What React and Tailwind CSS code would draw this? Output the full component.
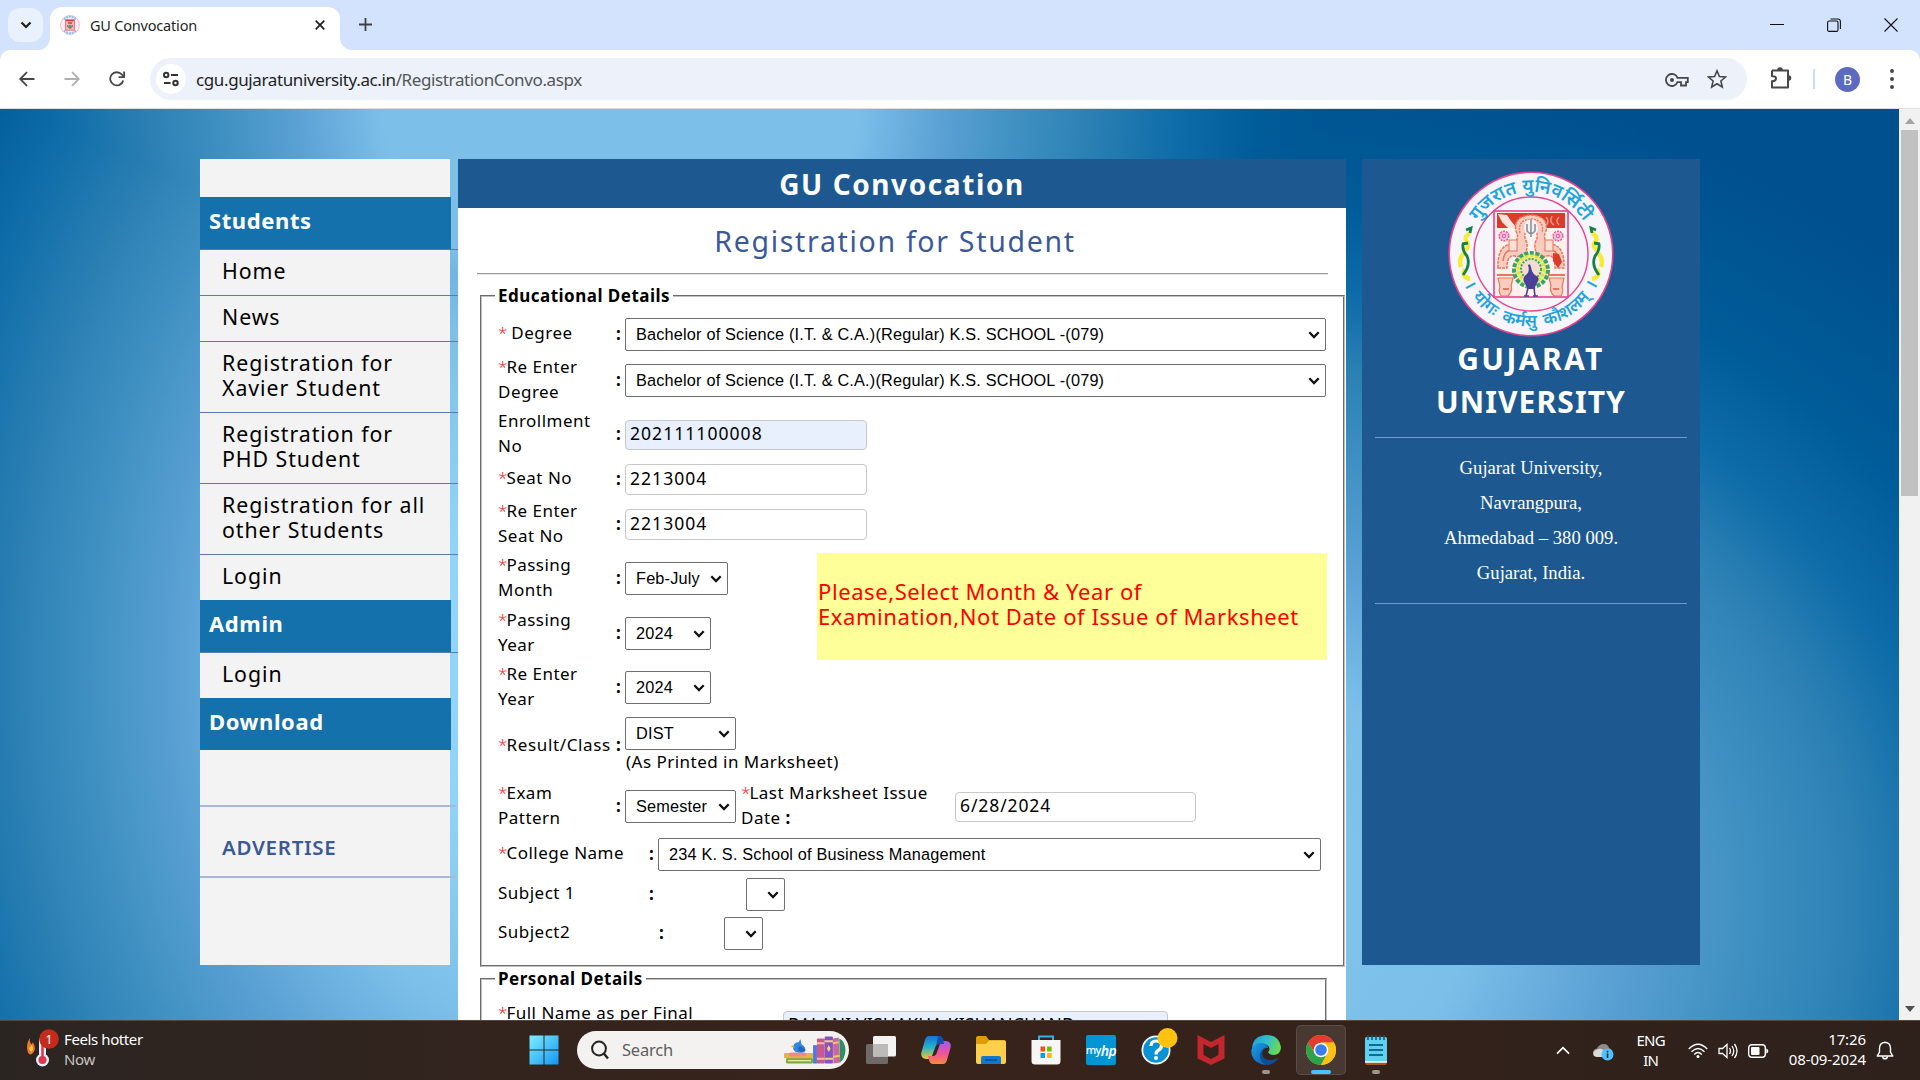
import React from "react";

/* ---------- browser chrome ---------- */

function Crest({ className }) {
  return (
    <svg viewBox="0 0 166 166" className={className}>
      <defs>
        <path id="arcTop" d="M 21 83 A 62 62 0 0 1 145 83" />
        <path id="arcBottom" d="M 9.500 73 A 74 74 0 1 0 156.500 73" />
      </defs>
      <circle cx="83" cy="83" r="81.8" fill="#f5f5fa" stroke="#e8428f" strokeWidth="1.6" />
      <circle cx="83" cy="83" r="57" fill="#f5f5fa" stroke="#e8428f" strokeWidth="1.4" />
      <rect x="46" y="40" width="74" height="86" fill="#fdf1ee" stroke="#e8428f" strokeWidth="1.6" />
      <rect x="49" y="42" width="68" height="15" fill="#dc3a2a" />
      <path d="M50 43l9 1 4 6 6 7h-9l-6-6z" fill="#fbe4de" />
      <path d="M98 46q4 5 0 8M104 45q-3 6 2 9M111 46q-4 4 0 8" stroke="#f29a86" strokeWidth="1.4" fill="none" />
      <path
        d="M50 97q-1-21 12-24 11-3 6-13-3-15 15-16 18 1 15 16-5 10 6 13 13 3 12 24h-9q0-14-8-12-13 3-12-13 6-11-4-14-10 3-4 14 1 16-12 13-8-2-8 12z"
        fill="#f8cdbf"
        stroke="#e8765c"
        strokeWidth="1.5"
        strokeDasharray="3 1"
      />
      <path d="M72 62q-3-13 11-14 14 1 11 14" stroke="#e8765c" strokeWidth="1.4" fill="none" strokeDasharray="2 1" />
      <path d="M55 90q1-10 8-11M111 90q-1-10-8-11" stroke="#e8765c" strokeWidth="1.5" fill="none" />
      <path d="M105 82l6 1 3 8-4 6-5-7z" fill="#dc3a2a" />
      <rect x="61" y="69" width="8" height="11" fill="#fbe0d6" stroke="#e8765c" />
      <rect x="97" y="69" width="8" height="11" fill="#fbe0d6" stroke="#e8765c" />
      <circle cx="56" cy="65" r="4.8" fill="#f7c3dc" stroke="#e8559a" strokeWidth="1.5" strokeDasharray="2 1" />
      <circle cx="56" cy="65" r="1.8" fill="none" stroke="#e8559a" />
      <circle cx="110" cy="65" r="4.8" fill="#f7c3dc" stroke="#e8559a" strokeWidth="1.5" strokeDasharray="2 1" />
      <circle cx="110" cy="65" r="1.8" fill="none" stroke="#e8559a" />
      <ellipse cx="83" cy="57" rx="7" ry="9" fill="#f3f1f3" />
      <path d="M83 48v18m-4-13v7q4 5 8 0v-7" stroke="#8f9299" strokeWidth="1.6" fill="none" />
      <path d="M50 107h15l-2 8q2 5-3 10h-7q-3-5-1-9zM116 107h-15l2 8q-2 5 3 10h7q3-5 1-9z" fill="#f8cdbf" stroke="#e8765c" strokeWidth="1.2" />
      <path d="M49 104h17M100 104h17M55 118h6M105 118h6" stroke="#e8765c" strokeWidth="2" />
      <circle cx="83" cy="99" r="17" fill="#e4f0a0" stroke="#3fa06a" strokeWidth="4" strokeDasharray="4 1.6" />
      <circle cx="83" cy="98" r="13" fill="none" stroke="#e6e238" strokeWidth="3" strokeDasharray="3 2" />
      <circle cx="83" cy="98" r="10" fill="#f6dcd0" stroke="#3fa06a" strokeWidth="2" strokeDasharray="2 1.4" />
      <path d="M80 94q2-2 3 2 1 6 4 8 6 3 2 8l-3 6h-6l-4-7q-2-5 3-8 3-3 1-9z" fill="#4b3f9c" />
      <path d="M80 117l-2 8M86 117l1 8M76 125h5M85 125h5" stroke="#4b3f9c" strokeWidth="1.6" />
      <path d="M22 62q-7 4-3 9 3 5-2 8" stroke="#f5ec33" strokeWidth="4" fill="none" />
      <path d="M17 82q-7 4-4 14M17 98q-4 8 5 10" stroke="#f5ec33" strokeWidth="4.5" fill="none" />
      <path d="M18 59l5-2-1 5M15 73q-1 6 4 12 4 9-4 19M14 73l6-1" stroke="#15804a" strokeWidth="2.8" fill="none" />
      <path d="M144 62q7 4 3 9-3 5 2 8M149 82q7 4 4 14M149 98q4 8-5 10" stroke="#f5ec33" strokeWidth="4.5" fill="none" />
      <path d="M148 59l-5-2 1 5M151 73q1 6-4 12-4 9 4 19M152 73l-6-1" stroke="#15804a" strokeWidth="2.8" fill="none" />
      <g fill="#1fa3dc" fontFamily="Noto Sans, sans-serif" fontWeight="600">
        <text textAnchor="middle" fontSize="18.5">
          <textPath href="#arcTop" startOffset="50%">
            गुजरात युनिवर्सिटी
          </textPath>
        </text>
        <text textAnchor="middle" fontSize="17" wordSpacing="4">
          <textPath href="#arcBottom" startOffset="50%">
            । योगः कर्मसु कौशलम् ।
          </textPath>
        </text>
      </g>
    </svg>
  );
}

function MiniCrest() {
  return (
    <svg viewBox="0 0 20 20" className="h-5 w-5">
      <circle cx="10" cy="10" r="9.4" fill="#fdf0f6" stroke="#f3b4d3" />
      <path d="M4 4.5A8 8 0 0 1 16 4.5M4 15.5A8 8 0 0 0 16 15.5" stroke="#7fc6ea" strokeWidth="2" fill="none" strokeDasharray="2 .8" />
      <rect x="5.5" y="4.8" width="9" height="10.4" fill="#f7b8ae" stroke="#ea5f78" strokeWidth=".8" />
      <path d="M6 5.5h8M8 8h4M7 11h1M12 11h1" stroke="#dc3a4a" strokeWidth="1.5" />
      <circle cx="10" cy="11.8" r="2" fill="#5a8f78" />
    </svg>
  );
}

function TabStrip() {
  return (
    <div className="flex h-[50px] bg-[#d3e3fd]">
      <div className="mt-2 ml-2 flex h-[34px] w-[35px] items-center justify-center rounded-xl bg-[#e9f1fe]">
        <svg viewBox="0 0 12 8" className="h-2 w-3">
          <path d="M1.500 1.500L6 6l4.500-4.500" fill="none" stroke="#1f1f1f" strokeWidth="2.200" />
        </svg>
      </div>
      <svg viewBox="0 0 12 12" className="-ml-[5px] h-3 w-3 self-end">
        <path d="M12 0v12H0A12 12 0 0 0 12 0z" fill="#fff" />
      </svg>
      <div className="mt-[7px] flex h-[43px] w-[290px] items-center rounded-t-xl bg-white pb-[7px] pl-[10px]">
        <MiniCrest />
        <span className="ml-[10px] flex-1 pt-[2px] text-[14.5px] tracking-[-0.2px] text-[#1f1f1f]">GU Convocation</span>
        <svg viewBox="0 0 10 10" className="mr-[15px] h-[10px] w-[10px]">
          <path d="M.7.7l8.600 8.600M9.300.7L.7 9.300" stroke="#1f1f1f" strokeWidth="1.700" />
        </svg>
      </div>
      <svg viewBox="0 0 12 12" className="h-3 w-3 self-end">
        <path d="M0 0v12h12A12 12 0 0 1 0 0z" fill="#fff" />
      </svg>
      <svg viewBox="0 0 13 13" className="mt-[18px] ml-[7px] h-[13px] w-[13px]">
        <path d="M6.500 0v13M0 6.500h13" stroke="#3c4043" strokeWidth="1.800" />
      </svg>
      <div className="ml-auto flex h-[49px] items-center gap-[43px] pr-[22px]">
        <svg viewBox="0 0 14 14" className="h-[14px] w-[14px]">
          <path d="M0 6.500h14" stroke="#111" strokeWidth="1" />
        </svg>
        <svg viewBox="0 0 14 14" className="h-[14px] w-[14px]">
          <rect x=".6" y="3" width="10.400" height="10.400" rx="1.500" fill="none" stroke="#111" strokeWidth="1.100" />
          <path d="M3.500 1h7.500a2.400 2.400 0 0 1 2.400 2.400v7.600" fill="none" stroke="#111" strokeWidth="1.100" />
        </svg>
        <svg viewBox="0 0 14 14" className="h-[14px] w-[14px]">
          <path d="M.5.5l13 13M13.500.5l-13 13" stroke="#111" strokeWidth="1.100" />
        </svg>
      </div>
    </div>
  );
}

function Toolbar() {
  return (
    <div className="bg-[#d3e3fd]">
      <div className="flex h-[59px] items-center rounded-t-[10px] border-b border-[#dcdfe3] bg-white">
        <svg viewBox="0 0 16 16" className="ml-[19px] h-4 w-4">
          <path d="M15.500 8H1.500M8 1.200L1.200 8 8 14.800" fill="none" stroke="#474747" strokeWidth="1.800" />
        </svg>
        <svg viewBox="0 0 16 16" className="ml-[29px] h-4 w-4">
          <path d="M.5 8h14M8 1.200L14.800 8 8 14.800" fill="none" stroke="#b0b0b0" strokeWidth="1.800" />
        </svg>
        <svg viewBox="0 0 16 16" className="ml-[29px] h-4 w-4">
          <path d="M14.200 9.500A6.600 6.600 0 1 1 12.800 3.500l1.700 1.700" fill="none" stroke="#474747" strokeWidth="1.800" />
          <path d="M15.100.5v5.600H9.600" fill="none" stroke="#474747" strokeWidth="1.800" />
        </svg>
        <div className="ml-[25px] flex h-[42px] w-[1597px] items-center rounded-full bg-[#ecf1fa]">
          <span className="ml-[6px] flex h-[30px] w-[30px] items-center justify-center rounded-full bg-white">
            <svg viewBox="0 0 16 16" className="h-4 w-4" fill="none" stroke="#333" strokeWidth="2">
              <circle cx="3.200" cy="4" r="2.200" />
              <path d="M8 4h7M1 12h6.500" />
              <circle cx="12.500" cy="12" r="2.200" />
            </svg>
          </span>
          <span className="ml-[10px] pt-px text-[17px] tracking-[-0.380px] text-[#555]">
            <span className="text-[#1f1f1f]">cgu.gujaratuniversity.ac.in</span>/RegistrationConvo.aspx
          </span>
          <svg viewBox="0 0 24 14" className="mt-[2px] ml-auto h-[14px] w-6" fill="none" stroke="#474747" strokeWidth="1.800">
            <path d="M12.500 4.800A6 6 0 1 0 12.500 9.200H16v3.300h5V9.200h1.800V4.800z" />
            <circle cx="7" cy="7" r="2" fill="#474747" stroke="none" />
          </svg>
          <svg viewBox="0 0 20 20" className="mr-[20px] ml-[18px] h-5 w-5" fill="none" stroke="#474747" strokeWidth="1.600">
            <path d="M10 1.800l2.400 5.700 6.100.5-4.600 4 1.400 6L10 14.800 4.700 18l1.400-6-4.600-4 6.100-.5z" />
          </svg>
        </div>
        <svg viewBox="0 0 22 25" className="-mt-[3px] ml-[23px] h-[25px] w-[22px]">
          <path
            d="M2 5.500h16v5.500M18 15v7.500H2v-6.200q4-.3 4-2.800T2 11.200V5.500M18 11v4"
            fill="none"
            stroke="#474747"
            strokeWidth="2"
            strokeLinejoin="round"
          />
          <path d="M7.200 5a2.800 2.800 0 0 1 5.600 0zM18.500 10.300a2.800 2.800 0 0 1 0 5.600z" fill="#474747" />
        </svg>
        <span className="ml-[21px] h-5 w-[2px] bg-[#c9dcfa]" />
        <span className="ml-[20px] flex h-[25px] w-[25px] items-center justify-center rounded-full bg-[#5c6bc0] text-[14px] text-white">
          B
        </span>
        <span className="ml-[30px] flex flex-col gap-[4px]">
          <i className="h-1 w-1 rounded-full bg-[#474747]" />
          <i className="h-1 w-1 rounded-full bg-[#474747]" />
          <i className="h-1 w-1 rounded-full bg-[#474747]" />
        </span>
      </div>
    </div>
  );
}

/* ---------- left menu ---------- */

const SectionHead = ({ children }) => (
  <div className="flex h-[52px] w-[251px] items-center bg-[#1571ab] pb-[5px] pl-[9px] text-[22px] font-bold tracking-[0.600px] text-white">
    {children}
  </div>
);

const MenuItem = ({ children }) => (
  <div className="w-[258px] border-t border-[#5f78b4] pt-[8px] pr-4 pb-[12px] pl-[22px] text-[21.300px] leading-[25px] tracking-[0.950px] text-black">
    {children}
  </div>
);

function Sidebar() {
  return (
    <div className="h-[806px] w-[250px] bg-[#f3f3f3] pt-[38px]">
      <SectionHead>Students</SectionHead>
      <MenuItem>Home</MenuItem>
      <MenuItem>News</MenuItem>
      <MenuItem>
        Registration for
        <br />
        Xavier Student
      </MenuItem>
      <MenuItem>
        Registration for
        <br />
        PHD Student
      </MenuItem>
      <MenuItem>
        Registration for all
        <br />
        other Students
      </MenuItem>
      <MenuItem>Login</MenuItem>
      <SectionHead>Admin</SectionHead>
      <MenuItem>Login</MenuItem>
      <SectionHead>Download</SectionHead>
      <div className="mt-[55px] flex h-[73px] w-[256px] items-center border-y-2 border-[#aab7d8] pt-[12px] pl-[22px] text-[20.500px] font-semibold tracking-[0.700px] text-[#3b5998]">
        ADVERTISE
      </div>
    </div>
  );
}

/* ---------- form ---------- */

const Star = () => <span className="font-light tracking-[-0.900px] text-red-500">*</span>;

const Select = ({ children, className }) => (
  <div
    className={
      "flex h-[33px] shrink-0 items-center justify-between rounded-[2px] border border-[#6f6f6f] bg-white pr-[5px] pl-[10px] font-['Liberation_Sans',sans-serif] text-[16.300px] tracking-[0.180px] whitespace-nowrap text-black " +
      className
    }
  >
    <span>{children}</span>
    <svg viewBox="0 0 12 8" className="mt-px h-2 w-3 shrink-0">
      <path d="M1.300 1.300L6 6l4.700-4.700" fill="none" stroke="#111" strokeWidth="2.300" />
    </svg>
  </div>
);

const Input = ({ children, className }) => (
  <div
    className={
      "flex shrink-0 items-center rounded-[4px] border border-[#c8c8c8] pb-[3px] pl-[4px] text-[17.500px] text-black " +
      className
    }
  >
    {children}
  </div>
);

function Row({ className, label, labelWidth = "w-[118px]", children }) {
  return (
    <div className={"flex items-center " + className}>
      <div className={"shrink-0 pb-[4px] whitespace-nowrap " + labelWidth}>{label}</div>
      <div className="w-[9px] shrink-0 pb-[3px] font-bold">:</div>
      {children}
    </div>
  );
}

const fieldBase =
  "border-2 border-[#c0c0c0] [border-style:groove] pl-[13px] text-[17px] leading-[25px] tracking-[0.480px] text-black";

function EducationalDetails() {
  return (
    <fieldset className={"mt-[11px] ml-[22px] h-[681px] w-[865px] " + fieldBase}>
      <legend className="px-[3px] text-[17px] leading-5 font-bold tracking-[0.480px]">Educational Details</legend>
      <div className="pl-[3px]">
        <Row className="mt-2 h-[41px]" label={<><Star /> Degree</>}>
          <Select className="w-[701px]">Bachelor of Science (I.T. &amp; C.A.)(Regular) K.S. SCHOOL -(079)</Select>
        </Row>
        <Row className="h-[51px]" label={<><Star />Re Enter<br />Degree</>}>
          <Select className="w-[701px]">Bachelor of Science (I.T. &amp; C.A.)(Regular) K.S. SCHOOL -(079)</Select>
        </Row>
        <Row className="mt-1 h-[50px]" label={<>Enrollment<br />No</>}>
          <Input className="h-[30px] w-[242px] bg-[#e8f0fe] tracking-[1.050px]">202111100008</Input>
        </Row>
        <Row className="h-[39px]" label={<><Star />Seat No</>}>
          <Input className="h-[31px] w-[242px] bg-white tracking-[1.050px]">2213004</Input>
        </Row>
        <Row className="h-[51px]" label={<><Star />Re Enter<br />Seat No</>}>
          <Input className="h-[31px] w-[242px] bg-white tracking-[1.050px]">2213004</Input>
        </Row>
        <div className="flex h-[165px]">
          <div className="w-[319px]">
            <Row className="h-[57px]" label={<><Star />Passing<br />Month</>}>
              <Select className="w-[103px]">Feb-July</Select>
            </Row>
            <Row className="h-[53px]" label={<><Star />Passing<br />Year</>}>
              <Select className="w-[86px]">2024</Select>
            </Row>
            <Row className="h-[55px]" label={<><Star />Re Enter<br />Year</>}>
              <Select className="w-[86px]">2024</Select>
            </Row>
          </div>
          <div className="mt-[3px] flex h-[107px] w-[510px] items-center bg-[#ffff99] pb-[5px] pl-px text-[22px] leading-[25px] tracking-[0.580px] text-[#ff0000]">
            <p className="whitespace-nowrap">
              Please,Select Month &amp; Year of
              <br />
              Examination,Not Date of Issue of Marksheet
            </p>
          </div>
        </div>
        <div className="mt-[2px] flex h-[60px]">
          <div className="mt-[15px] flex w-[127px]">
            <div className="w-[118px] tracking-[0.650px] whitespace-nowrap"><Star />Result/Class</div>
            <b>:</b>
          </div>
          <div>
            <Select className="w-[111px]">DIST</Select>
            <div className="-mt-px pl-px whitespace-nowrap">(As Printed in Marksheet)</div>
          </div>
        </div>
        <Row className="h-[59px]" label={<><Star />Exam<br />Pattern</>}>
          <Select className="w-[111px]">Semester</Select>
          <div className="ml-[5px] w-[214px] pb-[4px]">
            <Star />Last Marksheet Issue
            <br />
            Date <b>:</b>
          </div>
          <Input className="h-[30px] w-[241px] bg-white tracking-[0.900px]">6/28/2024</Input>
        </Row>
        <Row className="h-[37px]" labelWidth="w-[151px]" label={<><Star />College Name</>}>
          <Select className="w-[663px]">234 K. S. School of Business Management</Select>
        </Row>
        <Row className="h-[43px]" labelWidth="w-[151px]" label="Subject 1">
          <Select className="ml-[88px] w-[39px]" />
        </Row>
        <Row className="h-[35px]" labelWidth="w-[161px]" label="Subject2">
          <Select className="ml-[56px] w-[39px]" />
        </Row>
      </div>
    </fieldset>
  );
}

function PersonalDetails() {
  return (
    <fieldset className={"mt-[2px] ml-[22px] h-[300px] w-[847px] " + fieldBase}>
      <legend className="px-[3px] text-[17px] leading-5 font-bold tracking-[0.480px]">Personal Details</legend>
      <div className="flex pl-[3px]">
        <div className="mt-[11px] w-[285px] whitespace-nowrap">
          <Star />Full Name as per Final
        </div>
        <Input className="mt-[22px] h-[30px] w-[385px] bg-[#e8f0fe] tracking-[0.200px]">BALANI VISHAKHA KISHANCHAND</Input>
      </div>
    </fieldset>
  );
}

function MainColumn() {
  return (
    <div className="z-10 ml-2 h-[1400px] w-[888px] shrink-0 bg-white">
      <h1 className="flex h-[49px] items-center justify-center bg-[#1d5990] text-[28px] font-bold tracking-[1.600px] text-white">
        GU Convocation
      </h1>
      <h2 className="mt-[12px] pr-[14px] text-center text-[28.500px] leading-[42px] tracking-[1.680px] text-[#3b5998]">
        Registration for Student
      </h2>
      <hr className="mt-[11px] ml-[19px] h-[2px] w-[851px] border-t border-b border-t-[#9a9a9a] border-b-[#e4e4e4]" />
      <EducationalDetails />
      <PersonalDetails />
    </div>
  );
}

function UniversityCard() {
  return (
    <div className="ml-4 flex h-[806px] w-[338px] flex-col items-center bg-[#1d5990] text-white">
      <Crest className="mt-[12px] h-[166px] w-[166px]" />
      <div className="text-center text-[30px] leading-[43px] font-bold">
        <div className="tracking-[2.400px]">GUJARAT</div>
        <div className="tracking-[1.100px]">UNIVERSITY</div>
      </div>
      <div className="mt-[14px] flex h-[167px] w-[312px] flex-col items-center border-y border-[#7099dc] pt-[12px] font-['Liberation_Serif',serif] text-[18.670px] leading-[35px]">
        <div>Gujarat University,</div>
        <div>Navrangpura,</div>
        <div>Ahmedabad – 380 009.</div>
        <div>Gujarat, India.</div>
      </div>
    </div>
  );
}

function ScrollBar() {
  return (
    <div className="flex w-[21px] flex-col items-center bg-[#f1f1f1]">
      <svg viewBox="0 0 10 6" className="mt-[9px] h-[6px] w-[10px]">
        <path d="M0 6L5 0l5 6z" fill="#a3a3a3" />
      </svg>
      <div className="mt-[6px] h-[366px] w-[17px] bg-[#c1c1c1]" />
      <svg viewBox="0 0 10 6" className="mt-auto mb-[8px] h-[6px] w-[10px]">
        <path d="M0 0h10L5 6z" fill="#505050" />
      </svg>
    </div>
  );
}

/* ---------- taskbar ---------- */

function BooksArt() {
  return (
    <svg viewBox="0 0 64 30" className="h-[30px] w-[62px]">
      <rect x="2" y="23" width="28" height="6" rx="2" fill="#7aa63c" />
      <path d="M4 26h24" stroke="#dfe9a8" strokeWidth="1.500" />
      <rect x="0" y="18" width="30" height="5.500" rx="1" fill="#e9b04c" />
      <rect x="5" y="17.500" width="18" height="4" rx="2" fill="#f08a86" />
      <path d="M12 17q-4-3-2-7 1-3 5-3l2-3 1 5q5 3 4 7-2 3-10 1z" fill="#2f86e4" />
      <path d="M10 10l-3 1 4 2z" fill="#f0a030" />
      <path d="M16 11q5 1 6 5-5 2-8-1z" fill="#1f66bd" />
      <rect x="30" y="10" width="4" height="19" fill="#4b7be0" />
      <rect x="34" y="3" width="8" height="26" rx="1" fill="#c9588f" />
      <path d="M34 8h8M34 24h8" stroke="#f4c1a0" strokeWidth="2" />
      <rect x="42" y="1" width="8.500" height="28" rx="1" fill="#8653c4" />
      <path d="M42 6h8.500M42 24h8.500" stroke="#f0d080" strokeWidth="2" />
      <path d="M46.200 10l2 3.500-2 3.500-2-3.500z" fill="#f0d080" />
      <path d="M50.500 3l6-1 1.500 26-7 1z" fill="#c76a9c" />
      <path d="M50.500 8l6-1M51 22l7-1" stroke="#f6c26a" strokeWidth="2" />
      <path d="M57 3q6 2 6.500 12-.5 9-5.500 13z" fill="#2f8f62" />
    </svg>
  );
}

const Slot = ({ children, active, indicator }) => (
  <div
    className={
      "mt-[4px] flex h-[50px] w-[50px] shrink-0 flex-col items-center rounded-[5px] border " +
      (active ? "border-white/10 bg-white/10" : "border-transparent")
    }
  >
    <div className="mt-[8px] flex h-[32px] items-center justify-center">{children}</div>
    <div className={"mt-1 h-1 shrink-0 rounded-full " + (indicator || "")} />
  </div>
);

function Taskbar() {
  return (
    <div className="flex h-[60px] border-t border-[#55483f] bg-linear-to-r from-[#2b2522] via-[#38231a] via-45% to-[#2e211c] text-white">
      <div className="flex w-[519px] items-center pb-[3px]">
        <svg viewBox="0 0 36 40" className="ml-[26px] h-10 w-9">
          <path d="M1 19q1 9 5.500 5.500T7 13q-1 3-2 2-2-3-1-6-3 4-3 10z" fill="#f0762c" />
          <path d="M3 19q1 5 3 3t0-6z" fill="#ffc94a" />
          <rect x="13" y="8" width="7" height="24" rx="3.500" fill="#dff0fb" />
          <circle cx="16.500" cy="31" r="6.500" fill="#dff0fb" />
          <circle cx="16.500" cy="31" r="4" fill="#e0354e" />
          <path d="M16.500 14v16" stroke="#e0354e" strokeWidth="2.500" />
          <circle cx="23" cy="10" r="9.800" fill="#c42b1c" />
          <text x="23" y="14.500" textAnchor="middle" fontSize="13" fill="#fff" fontFamily="Noto Sans, sans-serif">1</text>
        </svg>
        <div className="ml-[2px] text-[15px] leading-5 tracking-[-0.400px]">
          <div>Feels hotter</div>
          <div className="text-[#c9c4c1]">Now</div>
        </div>
      </div>
      <Slot>
        <svg viewBox="0 0 30 30" className="h-[30px] w-[30px]">
          <defs>
            <linearGradient id="win" gradientUnits="userSpaceOnUse" x1="0" y1="0" x2="30" y2="30">
              <stop offset="0" stopColor="#7ff0fd" />
              <stop offset="1" stopColor="#1195f5" />
            </linearGradient>
          </defs>
          <path d="M.5.5h14v14H.5zM15.500.5h14v14h-14zM.5 15.500h14v14H.5zM15.500 15.500h14v14h-14z" fill="url(#win)" />
        </svg>
      </Slot>
      <div className="mt-[10px] ml-[8px] flex h-[38px] w-[272px] items-center rounded-full bg-[#f4f2f0]">
        <svg viewBox="0 0 20 20" className="ml-[13px] h-5 w-5" fill="none" stroke="#222" strokeWidth="2">
          <circle cx="9" cy="8.500" r="6.900" />
          <path d="M13.800 13.500l4.200 5" strokeWidth="2.400" />
        </svg>
        <span className="ml-[12px] pt-px text-[16.500px] tracking-[-0.200px] text-[#5e5e5e]">Search</span>
        <span className="mr-[3px] ml-auto"><BooksArt /></span>
      </div>
      <div className="ml-[7px] flex gap-[5px]">
        <Slot>
          <svg viewBox="0 0 30 28" className="h-7 w-[30px]">
            <rect x="0" y="8" width="22" height="20" rx="1.500" fill="#6e6a68" />
            <rect x="7" y="0" width="23" height="20.500" rx="1.500" fill="#f3f3f3" />
            <path d="M7 8h15v12.500H7z" fill="#bdbab8" />
          </svg>
        </Slot>
        <Slot>
          <svg viewBox="0 0 30 28" className="h-7 w-[30px]">
            <defs>
              <linearGradient id="cpA" x1="0" y1="0" x2="0" y2="1">
                <stop offset="0" stopColor="#1670d8" />
                <stop offset=".5" stopColor="#28b4c8" />
                <stop offset="1" stopColor="#f2c52e" />
              </linearGradient>
              <linearGradient id="cpB" x1="0" y1="0" x2="0" y2="1">
                <stop offset="0" stopColor="#a15cf0" />
                <stop offset=".55" stopColor="#f0539a" />
                <stop offset="1" stopColor="#f98a3c" />
              </linearGradient>
            </defs>
            <path d="M8 0h10q3 0 4 4l1 4h-5q-3 0-4 4l-3 8q-1 3-4 3H5q-6-1-4.500-7L4 4q1-4 4-4z" fill="url(#cpA)" />
            <path d="M22 28H12q-3 0-4-4l-1-4h5q3 0 4-4l3-8q1-3 4-3h2q6 1 4.500 7L26 24q-1 4-4 4z" fill="url(#cpB)" />
            <path d="M18 0q3 0 4 4l1 4h-5q-2 0-3 2l2-10z" fill="#124fae" />
          </svg>
        </Slot>
        <Slot>
          <svg viewBox="0 0 30 28" className="h-7 w-[30px]">
            <path d="M0 2q0-2 2-2h8l3 4h15q2 0 2 2v5H0z" fill="#e19a08" />
            <path d="M0 8h10l3-3.500h15q2 0 2 2V26q0 2-2 2H2q-2 0-2-2z" fill="#fdcf4b" />
            <path d="M5 28v-6q0-2 2-2h16q2 0 2 2v6z" fill="#1379cf" />
            <path d="M9 24h12" stroke="#0a4c92" strokeWidth="1.500" />
          </svg>
        </Slot>
        <Slot>
          <svg viewBox="0 0 30 30" className="h-[30px] w-[30px]">
            <path d="M8 6V1.500h14V6" fill="none" stroke="#35b0ea" strokeWidth="2" />
            <path d="M.5 5h29v21q0 3.500-3.500 3.500H4Q.5 29.500.5 26z" fill="#f6f6f6" />
            <path d="M9.500 11.500H14v5H9.500z" fill="#f25022" />
            <path d="M16 11.500h4.700v5H16z" fill="#7fba00" />
            <path d="M9.500 18H14v5H9.500z" fill="#00a4ef" />
            <path d="M16 18h4.700v5H16z" fill="#ffb900" />
          </svg>
        </Slot>
        <Slot>
          <div className="flex h-[30px] w-[30px] items-center justify-center rounded-[2px] bg-[#0096d6] text-[11px] font-medium tracking-[-0.600px]">
            my<span className="text-[14px] font-semibold italic">hp</span>
          </div>
        </Slot>
        <Slot>
          <svg viewBox="0 0 38 38" className="-mt-[8px] ml-[6px] h-[38px] w-[38px]">
            <circle cx="16" cy="23" r="14.500" fill="#fff" />
            <circle cx="16" cy="23" r="12.800" fill="#0a93d4" />
            <path d="M11 19q0-5 5.300-5t5.200 4.600q0 3-3 4.600-2.500 1.300-2.500 4.300" fill="none" stroke="#fff" strokeWidth="3.200" />
            <circle cx="16" cy="31" r="2" fill="#fff" />
            <circle cx="27.500" cy="11" r="10" fill="#ffc20e" />
          </svg>
        </Slot>
        <Slot>
          <svg viewBox="0 0 28 30" className="h-[30px] w-7">
            <path d="M.5 0L14 7 27.500 0v23.500L14 30 .5 23.500zM6.500 9v11L14 24l7.500-4V9L14 13z" fill="#c1272d" fillRule="evenodd" />
          </svg>
        </Slot>
        <Slot indicator="w-2 bg-[#9b9592]">
          <svg viewBox="0 0 30 30" className="h-[30px] w-[30px]">
            <defs>
              <linearGradient id="edgeTop" x1="0" y1="0" x2="1" y2=".3">
                <stop offset="0" stopColor="#1b9de2" />
                <stop offset=".6" stopColor="#35c1c5" />
                <stop offset="1" stopColor="#66d955" />
              </linearGradient>
              <linearGradient id="edgeSide" x1="0" y1="0" x2="1" y2="1">
                <stop offset="0" stopColor="#1aa0ea" />
                <stop offset="1" stopColor="#0b57a8" />
              </linearGradient>
            </defs>
            <path d="M1 13Q2 1 15 0q13 0 15 12 0 7-7 8-5 0-6-3 3-3 0-6.500Q10 6 1 13z" fill="url(#edgeTop)" />
            <path d="M.3 15Q2 9 9 8q8 0 8 5-5-1-6 5 0 8 8 11-3 1-6 .8Q0 27 .3 15z" fill="url(#edgeSide)" />
            <path d="M11 18q0 7 8 7 5 0 8.500-2.500Q24 29 17 30 8 28 9 19q1-5 6-6-4 3-4 5z" fill="#0d4f94" />
          </svg>
        </Slot>
        <Slot active indicator="w-5 bg-[#4cc2ff]">
          <svg viewBox="0 0 30 30" className="h-[30px] w-[30px]">
            <circle cx="15" cy="15" r="15" fill="#fbc116" />
            <path d="M2 7.500A15 15 0 0 0 15 30l6-11.500-12 0z" fill="#2da14b" />
            <path d="M2 7.500A15 15 0 0 1 28 7.500H15L9 18z" fill="#e33b2e" />
            <path d="M28 7.500A15 15 0 0 1 15 30l6.500-11L15 7.500z" fill="#fbc116" />
            <circle cx="15" cy="15" r="7.300" fill="#fff" />
            <circle cx="15" cy="15" r="5.800" fill="#3b7ded" />
          </svg>
        </Slot>
        <Slot indicator="w-2 bg-[#9b9592]">
          <svg viewBox="0 0 24 30" className="h-[30px] w-6">
            <path d="M1 25h22v3q0 2-2 2H3q-2 0-2-2z" fill="#a8541f" />
            <rect x="1" y="2" width="22" height="25.500" rx="1.500" fill="#5fd0ee" />
            <path d="M1 26h22v1.800H1z" fill="#eee" />
            <path d="M4 0v5M8 0v5M12 0v5M16 0v5M20 0v5" stroke="#0a5a88" strokeWidth="1.600" />
            <path d="M5 10h14M5 15h14M5 20h14" stroke="#0c6c94" strokeWidth="2" />
          </svg>
        </Slot>
      </div>
      <div className="ml-auto flex items-center pr-[26px] text-[15px] leading-5">
        <svg viewBox="0 0 14 9" className="h-[9px] w-[14px]">
          <path d="M1 7.700l6-6 6 6" fill="none" stroke="#fff" strokeWidth="1.700" />
        </svg>
        <svg viewBox="0 0 21 18" className="mt-[3px] ml-[23px] h-[18px] w-[21px]">
          <path d="M5 14q-5 0-5-4t4-4.500Q6 1 11 1q4 0 5 4 3 1 3 4z" fill="#8f8b88" />
          <path d="M1 13q-2-5 3-6.500 5-2 8 2l3 5.500H4z" fill="#dcdad8" />
          <circle cx="14.500" cy="11.500" r="6" fill="#4cc2ff" />
          <path d="M14.500 10.500v4.500M14.500 7.800v1.600" stroke="#123" strokeWidth="1.600" />
        </svg>
        <div className="ml-[21px] w-[32px] pb-[2px] text-center tracking-[-0.700px]">
          <div>ENG</div>
          <div>IN</div>
        </div>
        <svg viewBox="0 0 20 16" className="ml-[21px] h-4 w-5" fill="none" stroke="#fff" strokeWidth="1.400">
          <path d="M.8 6Q10-3.500 19.200 6M3.500 8.800q6.500-6.600 13 0M6.200 11.400q3.800-3.800 7.600 0" />
          <circle cx="10" cy="13.600" r="1.500" fill="#fff" stroke="none" />
        </svg>
        <svg viewBox="0 0 21 18" className="ml-[10px] h-[18px] w-[21px]" fill="none" stroke="#fff" strokeWidth="1.300">
          <path d="M1 6.500h3.500L9 2.500v13l-4.500-4H1z" />
          <path d="M11.500 6q2 3 0 6M14 4q3.500 5 0 10M16.500 2q5 7 0 14" />
        </svg>
        <svg viewBox="0 0 21 14" className="ml-[9px] h-[14px] w-[21px]">
          <rect x=".7" y=".7" width="16.600" height="12.600" rx="3" fill="none" stroke="#fff" strokeWidth="1.400" />
          <rect x="3" y="3" width="8.500" height="8" rx="1" fill="#fff" />
          <path d="M18.300 4.500q2 .5 2 2.500t-2 2.500z" fill="#fff" />
        </svg>
        <div className="ml-[20px] pb-[4px] text-right tracking-[-0.100px]">
          <div>17:26</div>
          <div>08-09-2024</div>
        </div>
        <svg viewBox="0 0 18 19" className="ml-[10px] h-[19px] w-[18px]" fill="none" stroke="#fff" strokeWidth="1.400">
          <path d="M9 1.200q-5.500.5-5.500 6v4L1.200 15h15.600l-2.300-3.800v-4q0-5.500-5.500-6z" strokeLinejoin="round" />
          <path d="M6.500 15.500q.5 2.300 2.500 2.300t2.500-2.300" />
        </svg>
      </div>
    </div>
  );
}

export default function App() {
  return (
    <div className="flex h-[1080px] w-[1920px] flex-col overflow-hidden font-['Noto_Sans',sans-serif]">
      <TabStrip />
      <Toolbar />
      <div className="flex h-[911px] overflow-hidden">
        <div className="flex w-[1899px] items-start overflow-hidden bg-[#004f8e] bg-[radial-gradient(ellipse_620px_500px_at_620px_0px,#7cc0ea_0%,#7cc0ea_38%,#5ba1d4_52%,#4292c4_63%,#2b80b3_76%,#0e6ca8_90%,#005c98_103%,#004f8e_125%),radial-gradient(ellipse_690px_950px_at_560px_560px,#93d7ff_0%,#90d4fc_20%,#7cc0ea_39%,#5ba1d4_55%,#4292c4_67%,#2b80b3_79%,#0e6ca8_92%,#005c98_103%,#004f8e_125%),radial-gradient(ellipse_900px_700px_at_1150px_791px,#84c6f0_0%,#7cc0ea_35%,#5ba1d4_52%,#4292c4_65%,#2b80b3_79%,#0e6ca8_89%,#005c98_102%,#004f8e_125%)] bg-blend-lighten pt-[50px] pl-[200px]">
          <Sidebar />
          <MainColumn />
          <UniversityCard />
        </div>
        <ScrollBar />
      </div>
      <Taskbar />
    </div>
  );
}
